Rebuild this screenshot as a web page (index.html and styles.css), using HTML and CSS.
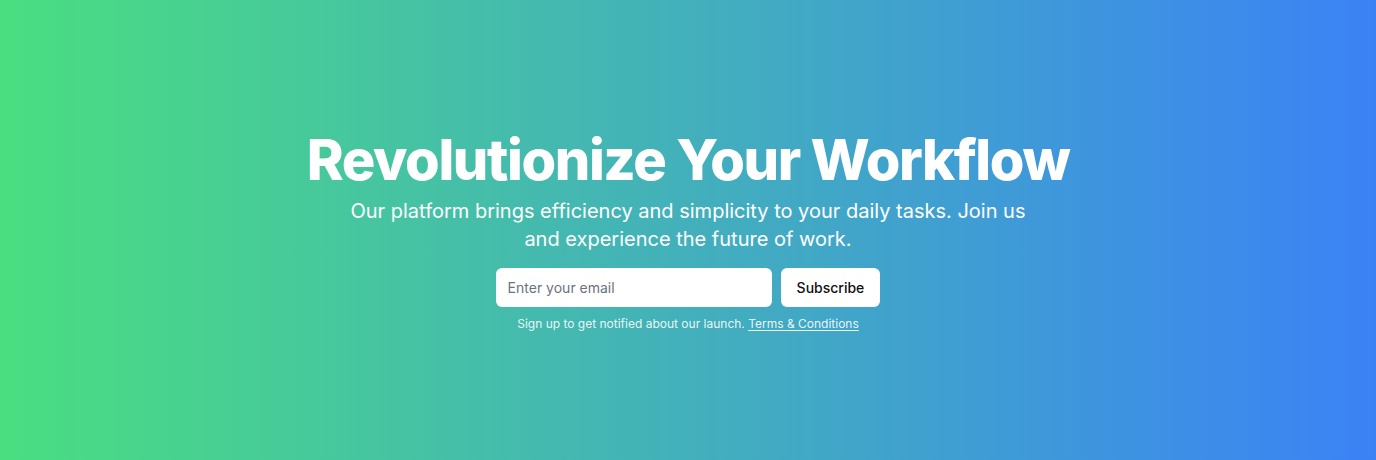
FILE: index.html
```html
<!DOCTYPE html>
<html lang="en">
<head>
<meta charset="utf-8">
<title>Revolutionize Your Workflow</title>
<link rel="stylesheet" href="styles.css">
</head>
<body>
<section class="hero">
  <div class="hero-inner">
    <h1 class="hero-title">Revolutionize Your Workflow</h1>
    <p class="hero-text">Our platform brings efficiency and simplicity to your daily tasks. Join us and experience the future of work.</p>
    <form class="signup">
      <input class="signup-input" type="email" placeholder="Enter your email">
      <button class="signup-button" type="button">Subscribe</button>
    </form>
    <p class="signup-note">Sign up to get notified about our launch. <a href="#" class="signup-link">Terms &amp; Conditions</a></p>
  </div>
</section>
</body>
</html>
```

FILE: styles.css
```css
* { box-sizing: border-box; }
html, body { margin: 0; padding: 0; }
body {
  font-family: Inter, "Liberation Sans", sans-serif;
  color: #fff;
}
.hero {
  height: 460px;
  background: linear-gradient(to right, #4ade80, #3b82f6);
  display: flex;
  align-items: center;
  justify-content: center;
  text-align: center;
}
.hero-inner {
  display: flex;
  flex-direction: column;
  align-items: center;
  padding-top: 4px;
}
.hero-title {
  margin: 0;
  font-size: 56px;
  line-height: 1;
  font-weight: 800;
  letter-spacing: -0.025em;
}
.hero-text {
  margin: 9px 0 0;
  max-width: 684px;
  font-size: 20px;
  line-height: 28px;
}
.signup {
  margin-top: 15px;
  display: flex;
  gap: 9px;
}
.signup-input {
  width: 276px;
  height: 39px;
  padding: 8px 12px;
  border: none;
  border-radius: 6px;
  background: #fff;
  font-family: inherit;
  font-size: 14px;
  color: #111;
}
.signup-input::placeholder { color: #6b7280; }
.signup-button {
  height: 39px;
  padding: 0 16px;
  border: none;
  border-radius: 6px;
  background: #fff;
  color: #111;
  font-family: inherit;
  font-size: 14px;
  font-weight: 500;
}
.signup-note {
  margin: 9px 0 0;
  font-size: 12px;
  line-height: 16px;
  color: rgba(255,255,255,0.9);
}
.signup-link {
  color: inherit;
  text-decoration: underline;
  text-underline-offset: 2px;
}
```
